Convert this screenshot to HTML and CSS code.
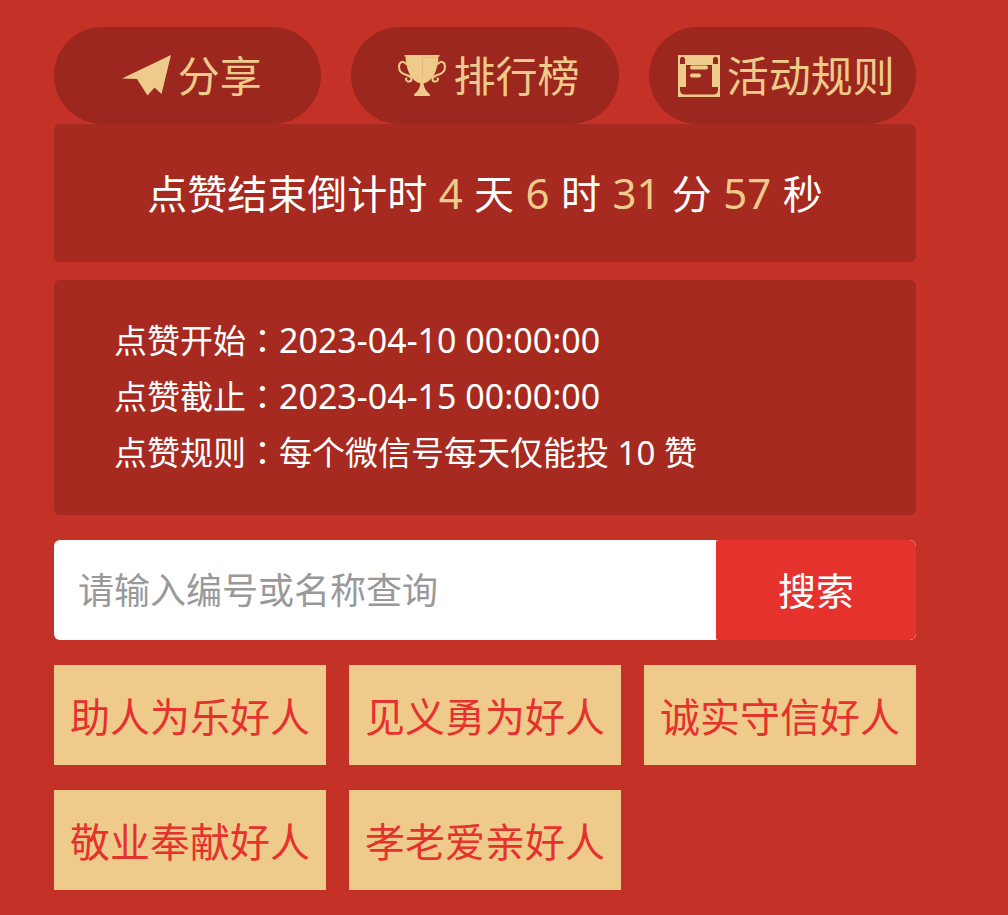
FILE: index.html
```html
<!DOCTYPE html>
<html lang="zh-CN">
<head>
<meta charset="utf-8">
<meta name="viewport" content="width=device-width, initial-scale=1">
<title>点赞活动</title>
<link rel="stylesheet" href="styles.css">
</head>
<body>
<main class="page">
  <nav class="actions">
    <a class="action" href="#share">
      <svg class="icon" width="49" height="42" viewBox="0 0 49 42" aria-hidden="true"><path fill="currentColor" d="M49 0 39.500 39 32.500 32.500 25.500 40.500 15 24 0 23.500Z"/></svg>
      <span>分享</span>
    </a>
    <a class="action" href="#ranking">
      <svg class="icon" width="48" height="42" viewBox="0 0 48 42" aria-hidden="true">
        <path fill="currentColor" d="M6.500 0H41.500V1.500H40.500C40 15 35 26 25.500 28.500C26 33 28.500 37 32 39.500V41H16V39.500C19.500 37 22 33 22.500 28.500C13 26 8 15 7.500 1.500H6.500Z"/>
        <path fill="none" stroke="currentColor" stroke-width="2" stroke-linecap="round" d="M8 9C5 5 1 7 1 12C1 18 6 19 11 21C15 23 14 27 10 26.500C8 26 7.500 24 8.500 23.500M40 9C43 5 47 7 47 12C47 18 42 19 37 21C33 23 34 27 38 26.500C40 26 40.500 24 39.500 23.500"/>
        <path fill="none" stroke="#e3b67b" stroke-width="1" d="M24.500 23V2.500H39"/>
      </svg>
      <span>排行榜</span>
    </a>
    <a class="action" href="#rules">
      <svg class="icon" width="42" height="42" viewBox="0 0 42 42" aria-hidden="true">
        <path fill="currentColor" fill-rule="evenodd" d="M0 0H42V42H0ZM2 4.500V9H7V4.500C7 .800 2 .800 2 4.500ZM35 4.500V9H40V4.500C40 .800 35 .800 35 4.500ZM8 10H34V32H40V35C40 38 38 39.500 35 39.500H7C4 39.500 2 38 2 35V32H8Z"/>
        <path fill="none" stroke="currentColor" stroke-width="4" stroke-linecap="round" d="M14 12.500H28M14 20.500H21"/>
      </svg>
      <span>活动规则</span>
    </a>
  </nav>

  <section class="panel countdown">点赞结束倒计时 <b class="num">4</b> 天 <b class="num">6</b> 时 <b class="num">31</b> 分 <b class="num">57</b> 秒</section>

  <section class="panel info">
    <p class="info-line">点赞开始<span class="colon" lang="zh-TW">：</span><time class="date">2023-04-10 00:00:00</time></p>
    <p class="info-line">点赞截止<span class="colon" lang="zh-TW">：</span><time class="date">2023-04-15 00:00:00</time></p>
    <p class="info-line">点赞规则<span class="colon" lang="zh-TW">：</span>每个微信号每天仅能投 10 赞</p>
  </section>

  <form class="search">
    <input class="search-input" type="text" placeholder="请输入编号或名称查询" aria-label="请输入编号或名称查询">
    <button class="search-button" type="submit">搜索</button>
  </form>

  <nav class="tags">
    <a class="tag" href="#c1">助人为乐好人</a>
    <a class="tag" href="#c2">见义勇为好人</a>
    <a class="tag" href="#c3">诚实守信好人</a>
    <a class="tag" href="#c4">敬业奉献好人</a>
    <a class="tag" href="#c5">孝老爱亲好人</a>
  </nav>
</main>
</body>
</html>
```

FILE: styles.css
```css
* {
  box-sizing: border-box;
}

body {
  margin: 0;
  background: #c43126;
  color: #fff;
  font-family: "Noto Sans", "Noto Sans CJK SC", sans-serif;
}

a {
  color: inherit;
  text-decoration: none;
}

.page {
  padding: 27px 92px 25px 54px;
}

.actions {
  display: grid;
  grid-template-columns: repeat(3, 1fr);
  gap: 30px;
}

.action {
  display: flex;
  align-items: center;
  justify-content: center;
  gap: 7px;
  height: 97px;
  padding-left: 8px;
  border-radius: 49px;
  background: #9c271e;
  color: #eecb8b;
  font-size: 42px;
  line-height: 60px;
  white-space: nowrap;
}

.icon {
  flex: none;
}

.panel {
  border-radius: 6px;
  background: #a62a20;
}

.countdown {
  padding: 40px 16px 38px;
  font-size: 40px;
  line-height: 60px;
  text-align: center;
}

.num {
  padding: 0 1px;
  color: #eecb8b;
  font-size: 42px;
  font-weight: 400;
  line-height: 1;
}

.info {
  margin-top: 18px;
  padding: 33px 60px 34px;
}

.info-line {
  margin: 0;
  font-size: 33px;
  line-height: 56px;
}

.date {
  font-size: 34px;
  line-height: 1;
}

.colon {
  font-family: "Noto Sans CJK TC", sans-serif;
  line-height: 1;
}

.search {
  display: flex;
  height: 100px;
  margin-top: 25px;
  border-radius: 6px;
  background: #fff;
  overflow: hidden;
}

.search-input {
  flex: 1;
  min-width: 0;
  padding: 0 24px;
  border: 0;
  outline: 0;
  background: transparent;
  color: #333;
  font-family: inherit;
  font-size: 36px;
}

.search-input::placeholder {
  color: #999;
  opacity: 1;
}

.search-button {
  width: 200px;
  padding: 0 0 4px;
  border: 0;
  border-radius: 2px 6px 6px 2px;
  background: #e6322d;
  color: #fff;
  font-family: inherit;
  font-size: 38px;
}

.tags {
  display: grid;
  grid-template-columns: repeat(3, 1fr);
  gap: 25px 23px;
  margin-top: 25px;
}

.tag {
  height: 100px;
  background: #eecb8b;
  color: #e6322d;
  font-size: 40px;
  line-height: 104px;
  text-align: center;
  white-space: nowrap;
}
```
